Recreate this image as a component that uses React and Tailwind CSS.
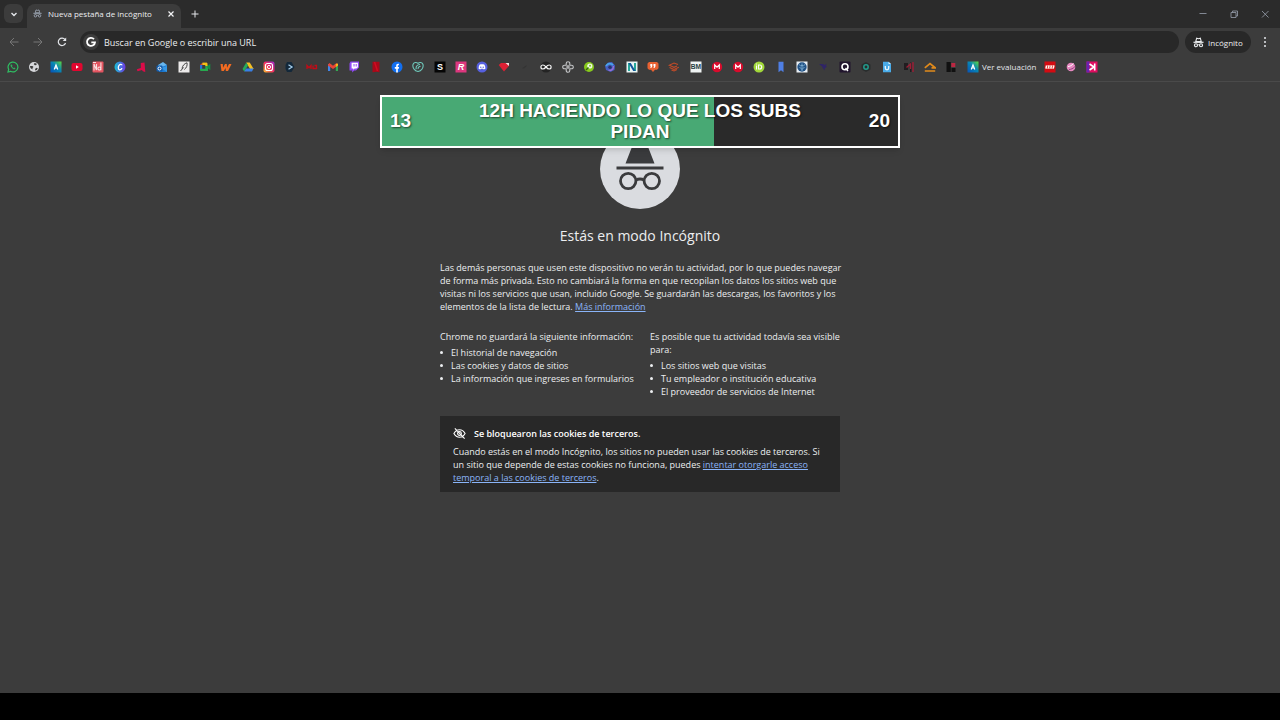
import React from "react";

const label = "font-['Liberation_Sans',sans-serif]";

function Svg({ children, title }) {
  return (
    <svg viewBox="0 0 12 12" className="block size-3" role="img" aria-label={title}>
      {children}
    </svg>
  );
}

function Glyph({ children, fill = "#fff", size = 9, y = 9, italic = false }) {
  return (
    <text
      x="6"
      y={y}
      fill={fill}
      fontSize={size}
      fontWeight="700"
      fontStyle={italic ? "italic" : "normal"}
      textAnchor="middle"
      className={label}
    >
      {children}
    </text>
  );
}

function Alura({ id }) {
  return (
    <>
      <defs>
        <linearGradient id={id} x1="0" y1="1" x2="1" y2="0">
          <stop offset="0" stopColor="#0752b8" />
          <stop offset="0.55" stopColor="#0787b5" />
          <stop offset="1" stopColor="#5fdc3c" />
        </linearGradient>
      </defs>
      <rect x="0.5" y="0.5" width="11" height="11" fill={`url(#${id})`} />
      <path d="M4.2 8.5 6 3.900l1.800 4.600M5 7h2" fill="none" stroke="#fff" strokeWidth="1.2" />
    </>
  );
}

function Mega() {
  return (
    <>
      <circle cx="6" cy="6" r="5.2" fill="#d90b2c" />
      <path d="M3.7 8V4L6 6.2 8.3 4v4" fill="none" stroke="#fff" strokeWidth="1.2" />
    </>
  );
}

const bookmarks = [
  ["WhatsApp", <><path d="M1 11l.7-2.6A4.9 4.9 0 1 1 3.6 10.3Z" fill="none" stroke="#2fbf63" strokeWidth="1.2" /><path d="M4.2 3.5c-.8.7-.3 2 .8 3.2s2.5 1.8 3.3.9l-1.2-.9-.7.5C5.6 6.8 5.1 6.2 4.8 5.5l.5-.6Z" fill="#2fbf63" stroke="#2fbf63" strokeWidth=".4" /></>],
  ["Web", <><circle cx="6" cy="6" r="5" fill="#d5d7da" /><path d="M2 5h2.500l1 1-1 1v1.500L2.400 7ZM6.500 1.900l-.7 1.300 1.200 1.100 1.500-.2L8.600 2.600ZM7 8l1.500-1.200 1.300.5-.9 1.700L7.300 9.500Z" fill="#3c3c3c" /></>],
  ["Evaluación", <Alura id="alura-a" />],
  ["YouTube", <><rect x="0.5" y="2" width="11" height="8" rx="2" fill="#e3062f" /><path d="M5 4.3v3.4L7.8 6Z" fill="#fff" /></>],
  ["Nd", <><rect x="0.5" y="0.5" width="11" height="11" rx="1" fill="#e45561" /><path d="M2 9.5V3l2.500 6V3M8.900 1.500v7.800M8.700 7.700a1.400 1.500 0 1 1 0-.3M1 1.500h3" stroke="#f7dfe0" fill="none" strokeWidth="1.100" /></>],
  ["Canva", <><defs><linearGradient id="canva"><stop stopColor="#16c0d4" /><stop offset="1" stopColor="#7134e4" /></linearGradient></defs><circle cx="6" cy="6" r="5.5" fill="url(#canva)" /><path d="M8 4.3C8 3 6 2.900 5 4.300S3.900 8.700 5.600 8.800C6.800 8.900 7.800 8 8 7.200" fill="none" stroke="#fff" strokeWidth="1.2" /></>],
  ["Angular", <path d="M5.800 2 9.500 1.500l.8 9.500-2.500-.7L7 9l-4.500 1.200L1.800 8.300l4-1.300Z" fill="#dc0c49" />],
  ["Outlook", <><path d="m2 4 5-3 4 3v6.5H3Z" fill="#67b6ef" /><path d="m3 7 8-3v5.500L9.500 11H3Z" fill="#1c7ad2" /><path d="m5 7 6 4V5Z" fill="#3597e4" /><rect x="0.5" y="4.5" width="6" height="6" rx="1" fill="#105cae" /><circle cx="3.5" cy="7.5" r="1.5" fill="none" stroke="#fff" /></>],
  ["Pluma", <><rect x="0.5" y="0.5" width="11" height="11" fill="#eceaea" /><path d="M4 7.500C4.500 4.500 6.500 2.500 9 1.800 9.500 4.500 8.500 7 6.300 8.500M2.500 10l3-3.500" fill="none" stroke="#444" strokeWidth="1" /></>],
  ["Meet", <><path d="M3.500 1.800H8v2H3.500Z" fill="#f7be16" /><path d="M1 4 3.500 1.800v2.200Z" fill="#e54335" /><path d="M1 4h2.200v4.200H1Z" fill="#2970dc" /><path d="M1 7.700h5.300V4.500H9V10H2q-1 0-1-1Z" fill="#27a94f" /><path d="M3.500 1.800H7.500q1 0 1 1V5H6.300V4H3.500Z" fill="#f7be16" /><path d="m8.300 5.300 3-2.500v6.500l-3-2.500Z" fill="#139143" /></>],
  ["W", <path d="M.5 3h2.300l.2 3.800L5 3h1.800l.2 3.700L9 3h2.500L8 10H5.800l-.2-3-1.800 3H1.500Z" fill="#f36b21" />],
  ["Drive", <><path d="M4.200 1.500h3.500l4 6.500H8Z" fill="#f4c023" /><path d="M4.200 1.500.5 8l1.800 2.500 3.700-6Z" fill="#27a95a" /><path d="M4.100 7.500h7.500L10 10.500H2.300Z" fill="#387fe5" /></>],
  ["Instagram", <><defs><linearGradient id="insta" x1="0" y1="1" x2="1" y2="0"><stop stopColor="#fdc52d" /><stop offset=".5" stopColor="#ee2a62" /><stop offset="1" stopColor="#9a30d0" /></linearGradient></defs><rect x=".5" y=".5" width="11" height="11" rx="2" fill="url(#insta)" /><rect x="2.5" y="2.5" width="7" height="7" rx="2" fill="none" stroke="#fff" strokeWidth="1.1" /><circle cx="6" cy="6" r="1.6" fill="none" stroke="#fff" strokeWidth="1" /></>],
  ["Flecha", <><path d="M3 1h4.500L10.500 6l-3 5H3L1.500 8V4Z" fill="#13283a" /><path d="m4.500 3.800 3.500 2.200-3.500 2.200" fill="none" stroke="#a5cdea" strokeWidth="1.300" /></>],
  ["MU", <path d="M1 8V4.500l2 2.200 2-2.200V8M7 4.500V7.500h3.500v-3H8.500" fill="none" stroke="#c30b16" strokeWidth="1.300" />],
  ["Gmail", <><path d="M1 10V3h2.200v7Z" fill="#4285e8" /><path d="M8.800 10V3H11v7Z" fill="#33a852" /><path d="M1 3.500 2.500 2 6 4.800 9.500 2 11 3.500v1L6 8 1 4.500Z" fill="#e84436" /><path d="M8.800 3 11 2.500v2L8.800 6Z" fill="#f6bc16" /></>],
  ["Twitch", <><path d="M2.500.5H11v6L8 9.500H6.200l-2 2v-2H1.500v-7Z" fill="#9048f5" /><path d="M3.600 1.700h6.300v4.500L8.400 7.500H6.600L5.200 8.700V7.500H3.600Z" fill="#fff" /><path d="M6 3v2.500M8.200 3v2.500" stroke="#9048f5" /></>],
  ["Netflix", <><path d="M2.500.8h7v10.500l-3-.5-4 .5Z" fill="#a80919" /><path d="m4.500 1 3 9" stroke="#d10c22" strokeWidth="1.5" /></>],
  ["Facebook", <><circle cx="6" cy="6" r="5.5" fill="#126ff0" /><path d="M5.200 11.500V7.700H3.800V6h1.400V4.800c0-1.600.8-2.300 2.700-2v1.400C6.900 4.100 6.800 4.400 6.800 5v1h1.300l-.3 1.700h-1v3.800Z" fill="#fff" /></>],
  ["GoDaddy", <path d="M6 10.500C2.500 10 .3 6.500 1 3.500 1.800 1 4.500 1 6 2.300 7.500 1 10.200 1 11 3.500 11.700 6.500 9.500 10 6 10.500ZM4.300 8.200C3.500 6 5 3.500 8 3.500M6.200 8C5.800 6.500 7 5.300 8.600 5.200" fill="none" stroke="#6fc9bb" strokeWidth="1.100" />],
  ["S", <><rect x=".5" y=".5" width="11" height="11" fill="#050505" /><Glyph>S</Glyph></>],
  ["R", <><rect x=".5" y=".5" width="11" height="11" fill="#dd377e" /><Glyph italic>R</Glyph></>],
  ["Discord", <><circle cx="6" cy="6" r="5.5" fill="#5660df" /><path d="M3.5 3.8C5 3.200 7 3.200 8.500 3.800 9.200 5 9.500 6.500 9.400 7.700L7.800 8.500l-.6-.8H4.800l-.6.8-1.600-.8c0-1.500.3-2.700.9-3.900Z" fill="#fff" /><circle cx="4.800" cy="6.200" r=".7" fill="#5660df" /><circle cx="7.200" cy="6.200" r=".7" fill="#5660df" /></>],
  ["Rubí", <><path d="M.7 4 3 2h6l2.300 2.500L6 10.500Z" fill="#dd2034" /><path d="M7.500 2 11 5V2Z" fill="#f5dfe0" /></>],
  ["Marcador", <path d="M3 7.500 7.500 4v1.500L5 7.500Z" fill="#343434" />],
  ["Infinito", <><circle cx="6" cy="6" r="5.5" fill="#242424" /><path d="M6 6C4.700 4.300 3.800 4 2.900 4a2 2 0 0 0 0 4c.9 0 1.800-.4 3.100-2S8.200 4 9.100 4a2 2 0 0 1 0 4C8.200 8 7.300 7.600 6 6Z" fill="none" stroke="#f5f5f5" strokeWidth="1.2" /></>],
  ["Flor", <><path d="M4.200 4.200V2.500a1.800 1.800 0 0 1 3.600 0v1.700h1.700a1.800 1.800 0 0 1 0 3.600H7.800v1.700a1.800 1.800 0 0 1-3.600 0V7.800H2.500a1.800 1.800 0 0 1 0-3.600Z" fill="#444" stroke="#c5c6c8" strokeWidth="1.100" /><path d="M6 4v4M4 6h4" stroke="#c5c6c8" strokeWidth="1.200" /></>],
  ["Verde", <><circle cx="6" cy="6" r="5" fill="#87c91c" /><circle cx="6.800" cy="5" r="2.600" fill="#edf9e1" /><path d="m3 9 2.500-2.500" stroke="#37660b" strokeWidth="1.5" /><circle cx="7" cy="4.800" r="1" fill="#80bf25" /></>],
  ["Espiral", <><path d="M4 1.500 8 1l3 3.500-.5 4.500-4 2L2 9 1 5Z" fill="#465fc3" /><path d="M2 5c2-3 5-3 7-1" stroke="#48a6e8" strokeWidth="1.8" fill="none" /><path d="M9.500 5c0 4-3 5-5 4" stroke="#9d6fd5" strokeWidth="1.3" fill="none" /><circle cx="6" cy="6.2" r="1.7" fill="#293568" /></>],
  ["N", <><rect x=".5" y=".5" width="11" height="11" fill="#e9f4f4" /><path d="M3 10V2M9 2v8" stroke="#26a69a" strokeWidth="2" /><path d="M2.500 2h2.300l4.700 8H7.200Z" fill="#12569b" /></>],
  ["Citas", <><path d="M2 1h8l1.500 1.500v4.800L10 8.700H8L6 11 4 8.700H2L.5 7.300V2.500Z" fill="#e76132" /><path d="M3.300 3h2v2.200L4.300 7h-1l.6-1.800h-.6ZM6.500 3h2v2.200L7.500 7h-1l.6-1.800h-.6Z" fill="#fff" /></>],
  ["Capas", <path d="M10 3.500 6 2 1.200 4.200 6 6.300l3-1.300M1.500 6.500 6 8.500 10.800 6.300M3.500 9 6 10l3-1.500" fill="none" stroke="#c34b28" strokeWidth="1.100" />],
  ["BM", <><rect x=".5" y=".5" width="11" height="11" fill="#eff3f2" /><Glyph fill="#263f43" size={6.6} y={8.4}>BM</Glyph></>],
  ["Mega", <Mega />],
  ["Mega 2", <Mega />],
  ["ORCID", <><circle cx="6" cy="6" r="5.5" fill="#a2d83a" /><path d="M3.5 4.500v4M5.500 4h1.200a2 2 0 0 1 0 4H5.500Z" fill="none" stroke="#fff" strokeWidth="1.100" /><circle cx="3.5" cy="3" r=".6" fill="#fff" /></>],
  ["Marca", <path d="M3.500.8h5v10.500L6 9.300l-2.500 2Z" fill="#4f7fe5" />],
  ["Mundo", <><rect x=".5" y=".5" width="11" height="11" fill="#e8eef4" /><circle cx="6" cy="6" r="4.7" fill="#215286" /><path d="M3 3.500q1.500 2 3 1 1.500 1 3-1M6 2.500v7.500M3.500 6l2.500 2.500L8.500 6" stroke="#7fb0d4" fill="none" strokeWidth=".9" /></>],
  ["Violeta", <path d="M2 3h4l1.500 1L9.500 2.800 9 5l1 .7L8 7 7.500 9.500 5.800 7 5 5.500Z" fill="#302566" />],
  ["Q", <><rect x=".5" y=".5" width="11" height="11" rx="1" fill="#21152d" /><circle cx="6" cy="5.8" r="3" fill="none" stroke="#fff" strokeWidth="1.6" /><path d="m6.500 7 2.500 3" stroke="#fff" strokeWidth="1.3" /></>],
  ["Hexágono", <><path d="m6 1 4.500 2.500v5L6 11 1.500 8.500v-5Z" fill="#292d2d" /><circle cx="6" cy="6" r="2.2" fill="none" stroke="#229b8c" strokeWidth="1.5" /></>],
  ["Documento", <><path d="M2 .8h5.500L10 3v8.300H2Z" fill="#49abe9" /><path d="M7.500.8V3H10Z" fill="#d9f0fc" /><path d="M4.300 5v2q0 1.800 1.700 1.800T7.700 7V5" fill="none" stroke="#eaf7ff" strokeWidth="1.300" /></>],
  ["Rojo", <><path d="M1 2h4v7H1ZM7 1.500h1.500V11H7Z" fill="#211d20" /><path d="m3.500 6.500 4-3.500v5M10 1v10" stroke="#9d1d35" strokeWidth="1.400" fill="none" /></>],
  ["Casa", <path d="m.8 6.800 5.200-4.300 5.200 4.300H7.500M.8 10h10.400" fill="none" stroke="#e18a1b" strokeWidth="1.7" />],
  ["Bloques", <><path d="M1.500 1h4.300v10H1.500ZM6.500 7h4v4h-4Z" fill="#111" /><path d="M6.300 2h4v4h-4Z" fill="#bc2742" /></>],
  ["Alura", <Alura id="alura-b" />],
];

const tail = [
  ["LEGO", <><rect x=".5" y=".5" width="11" height="11" fill="#d40b12" /><path d="M2.600 4.500 2 7.500M5 4.500 4.400 7.500M7.400 4.500 6.800 7.500M9.800 4.500 9.200 7.500" stroke="#fff" strokeWidth="1.500" /><path d="M1.500 7.300h8M3 4.800h7.500" stroke="#f6c9b5" strokeWidth=".7" /></>],
  ["Rosa", <><circle cx="6" cy="6" r="4.3" fill="#e689c0" /><path d="M4 8.500c2 0 4-1 6-3" fill="none" stroke="#8d3b7b" strokeWidth=".9" /><path d="M3 5.500c2 0 3.500-1 5.500-3" stroke="#fff" fill="none" /></>],
  ["K", <><rect x=".5" y=".5" width="11" height="11" fill="#df0d60" /><rect x=".5" y=".5" width="3" height="11" fill="#6722b3" /><path d="M8.700 2.500v7M8 6 3.500 3M8 6 3.500 9" stroke="#fff" strokeWidth="1.6" /></>],
];

function Incognito({ className }) {
  return (
    <svg viewBox="0 0 24 24" className={className} aria-hidden="true">
      <path d="M8 2.500 6 10h12L16 2.500l-4 1.200Z" fill="none" stroke="currentColor" strokeWidth="2.400" />
      <path d="M1 11.500h22" stroke="currentColor" strokeWidth="2.600" />
      <circle cx="6.500" cy="18" r="3.300" fill="none" stroke="currentColor" strokeWidth="2.600" />
      <circle cx="17.500" cy="18" r="3.300" fill="none" stroke="currentColor" strokeWidth="2.600" />
      <path d="M9.500 17.500q2.500-1.500 5 0" fill="none" stroke="currentColor" strokeWidth="2" />
    </svg>
  );
}

function Line({ d, width = 1 }) {
  return (
    <svg viewBox="0 0 12 12" className="block size-3" aria-hidden="true">
      <path d={d} fill="none" stroke="currentColor" strokeWidth={width} />
    </svg>
  );
}

function Bookmark({ item }) {
  return (
    <a href="#" aria-label={item[0]} className="block shrink-0">
      <Svg title={item[0]}>{item[1]}</Svg>
    </a>
  );
}

function TabStrip() {
  return (
    <div className="flex h-7 items-end bg-[#2b2b2b] pl-1">
      <button aria-label="Buscar pestañas" className="mb-[5px] grid size-[19px] place-items-center rounded-md bg-[#3c3c3c] text-gray-200">
        <Line d="M3.500 5 6 7.500 8.500 5" width={1.4} />
      </button>
      <div className="ml-1 flex h-6 w-[154px] items-center rounded-t-lg bg-[#3c3c3c] pr-1 pb-[5px] pl-[6px]">
        <Incognito className="size-[9px] text-gray-400" />
        <span className="ml-[6px] text-[8px] whitespace-nowrap">Nueva pestaña de incógnito</span>
        <button aria-label="Cerrar pestaña" className="ml-auto text-gray-100">
          <Line d="m3.500 3.500 5 5m0-5-5 5" width={1.2} />
        </button>
      </div>
      <button aria-label="Nueva pestaña" className="mb-2 ml-2 text-gray-200">
        <Line d="M6 2.500v7M2.500 6h7" />
      </button>
      <div className="mb-2 ml-auto flex gap-[19px] pr-[9px] text-gray-400">
        <button aria-label="Minimizar"><Line d="M2.500 5.500h7" width={0.8} /></button>
        <button aria-label="Restaurar"><Line d="M3 4.500h5V9.500H3ZM4.500 4.500V3h5v5H8" width={0.8} /></button>
        <button aria-label="Cerrar"><Line d="m3 3 6.500 6.500m0-6.500L3 9.500" width={0.8} /></button>
      </div>
    </div>
  );
}

function Toolbar() {
  return (
    <div className="flex h-7 items-center bg-[#3c3c3c] pr-[9px] pl-2">
      <button aria-label="Atrás" className="text-[#777]"><Line d="M10.500 6H2m4-4L2 6l4 4" /></button>
      <button aria-label="Adelante" className="ml-3 text-[#777]"><Line d="M1.500 6H10M6 2l4 4-4 4" /></button>
      <button aria-label="Volver a cargar" className="ml-3 text-gray-200">
        <svg viewBox="0 0 12 12" className="block size-3" aria-hidden="true">
          <path d="M9.500 7A3.700 3.700 0 1 1 9 3.700" fill="none" stroke="currentColor" strokeWidth="1.200" />
          <path d="M10.200 1.500V5H6.700Z" fill="currentColor" />
        </svg>
      </button>
      <div className="ml-3 flex h-[22px] flex-1 items-center rounded-full bg-[#282828] pl-[3px]">
        <span className="grid size-4 place-items-center rounded-full bg-[#3c3c3c]">
          <svg viewBox="0 0 12 12" className="size-3" aria-label="Google" role="img">
            <path d="M9 3.200A4 4 0 1 0 10 6.300H6.300" fill="none" stroke="#fff" strokeWidth="1.800" />
          </svg>
        </span>
        <input
          aria-label="Barra de direcciones"
          placeholder="Buscar en Google o escribir una URL"
          className="ml-[5px] min-w-0 flex-1 bg-transparent outline-none placeholder:text-[#eceef0]"
        />
      </div>
      <button className="ml-[6px] flex h-[22px] w-[66px] items-center rounded-full bg-[#282828] pl-2">
        <Incognito className="mr-1 size-[11px]" />
        <span className="text-[8px]">Incógnito</span>
      </button>
      <button aria-label="Menú" className="ml-2 text-gray-200">
        <svg viewBox="0 0 12 12" className="block size-3" fill="currentColor" aria-hidden="true">
          <circle cx="6" cy="2" r="1" /><circle cx="6" cy="6" r="1" /><circle cx="6" cy="10" r="1" />
        </svg>
      </button>
    </div>
  );
}

function GoalBar() {
  const progress = 64.4;
  return (
    <div className={`absolute top-[13px] left-1/2 h-[53px] w-[520px] -translate-x-1/2 border-2 border-white bg-[#2a2a2a] text-[19px] leading-[21px] font-bold text-white shadow-md ${label}`}>
      <div className="absolute inset-y-0 left-0 bg-[#48a974]" style={{ width: `${progress}%` }} />
      <div className="relative flex h-full items-center justify-between px-2 pb-[2px] [text-shadow:1px_1px_2px_#0009]">
        <span>13</span>
        <span className="w-[350px] text-center">12H HACIENDO LO QUE LOS SUBS PIDAN</span>
        <span>20</span>
      </div>
    </div>
  );
}

function BulletList({ items }) {
  return (
    <ul className="mt-[3px]">
      {items.map((text) => (
        <li key={text} className="flex items-center gap-2 before:size-[3px] before:shrink-0 before:rounded-full before:bg-current before:content-['']">
          {text}
        </li>
      ))}
    </ul>
  );
}

const link = "text-[#8ab4f8] underline";

export default function App() {
  return (
    <div className="flex min-h-screen flex-col bg-[#3c3c3c] font-['Open_Sans','Noto_Sans',sans-serif] text-[9px] leading-[13px] text-[#eceef0]">
      <header>
        <TabStrip />
        <Toolbar />
        <nav aria-label="Favoritos" className="flex h-[26px] items-center border-b border-[#4a4a4a] pb-1 pl-[7px]">
          <div className="flex w-[972px] items-center justify-between">
            {bookmarks.map((b) => <Bookmark key={b[0]} item={b} />)}
          </div>
          <a href="#" className="ml-[3px] w-[62px] text-[8px] whitespace-nowrap text-gray-200">Ver evaluación</a>
          <div className="flex gap-[9px]">
            {tail.map((b) => <Bookmark key={b[0]} item={b} />)}
          </div>
        </nav>
      </header>

      <main className="relative flex-1 pt-[47px]">
        <GoalBar />
        <div className="mx-auto w-[400px]">
          <svg viewBox="0 0 80 80" className="mx-auto block size-20" role="img" aria-label="Incógnito">
            <circle cx="40" cy="40" r="40" fill="#dadce0" />
            <path d="m25.500 34.500 7-18q1-2 3-1.200l4.500 1.500 4.500-1.500q2-.8 3 1.200l7 18Z" fill="#3a3b3d" />
            <path d="M16.500 39h47" stroke="#3a3b3d" strokeWidth="3" />
            <g fill="none" stroke="#3a3b3d" strokeWidth="2.800">
              <circle cx="28.200" cy="52" r="7.700" />
              <circle cx="51.800" cy="52" r="7.700" />
              <path d="M35.700 51q4.300-2 8.600 0" />
            </g>
          </svg>
          <h1 className="mt-4 text-center text-[14px] leading-[22px]">Estás en modo Incógnito</h1>
          <p className="mt-[14px] whitespace-nowrap">
            Las demás personas que usen este dispositivo no verán tu actividad, por lo que puedes navegar<br />
            de forma más privada. Esto no cambiará la forma en que recopilan los datos los sitios web que<br />
            visitas ni los servicios que usan, incluido Google. Se guardarán las descargas, los favoritos y los<br />
            elementos de la lista de lectura. <a href="#" className={link}>Más información</a>
          </p>
          <div className="mt-[17px] grid grid-cols-2 gap-5 whitespace-nowrap">
            <section>
              <p>Chrome <span className="font-medium">no guardará</span> la siguiente información:</p>
              <BulletList items={["El historial de navegación", "Las cookies y datos de sitios", "La información que ingreses en formularios"]} />
            </section>
            <section>
              <p>Es posible que tu actividad <span className="font-medium">todavía sea visible</span><br />para:</p>
              <BulletList items={["Los sitios web que visitas", "Tu empleador o institución educativa", "El proveedor de servicios de Internet"]} />
            </section>
          </div>
          <section className="mt-[18px] bg-[#282828] px-[13px] pt-[11px] pb-2 whitespace-nowrap">
            <h2 className="flex items-center font-semibold text-white">
              <svg viewBox="0 0 14 14" className="mr-2 size-[13px]" fill="none" stroke="currentColor" strokeWidth="1.200" aria-hidden="true">
                <path d="M1 7c3-5.300 9-5.300 12 0-3 5.300-9 5.300-12 0ZM2 1.500l10.500 11" />
                <circle cx="7" cy="7" r="2" />
              </svg>
              Se bloquearon las cookies de terceros.
            </h2>
            <p className="mt-[5px]">
              Cuando estás en el modo Incógnito, los sitios no pueden usar las cookies de terceros. Si<br />
              un sitio que depende de estas cookies no funciona, puedes <a href="#" className={link}>intentar otorgarle acceso<br />temporal a las cookies de terceros</a>.
            </p>
          </section>
        </div>
      </main>
      <footer className="h-[27px] bg-black" />
    </div>
  );
}
